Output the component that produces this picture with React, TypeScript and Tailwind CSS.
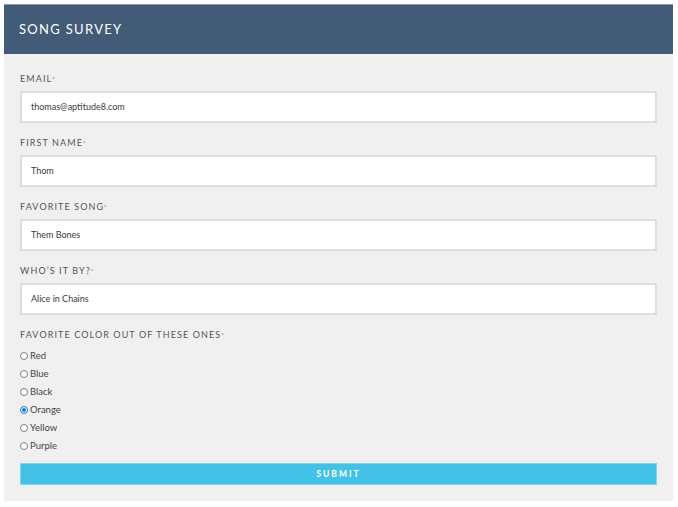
import React from "react";

const fields = [
  { label: "EMAIL", value: "thomas@aptitude8.com" },
  { label: "FIRST NAME", value: "Thom" },
  { label: "FAVORITE SONG", value: "Them Bones" },
  { label: "WHO’S IT BY?", value: "Alice in Chains" },
];

const colors = ["Red", "Blue", "Black", "Orange", "Yellow", "Purple"];

export default function App() {
  return (
    <div className="w-[678px] h-[507px] bg-white p-[4px] pr-[5px]" style={{ fontFamily: "Lato, 'Open Sans', sans-serif" }}>
      <div className="bg-[#f0f0f0] h-[497px] flex flex-col">
        <div className="h-[50px] bg-[#425b77] border-t border-[#8a9bb0] flex items-center pl-[15px]">
          <span className="text-white text-[13px] tracking-[1.3px]">SONG SURVEY</span>
        </div>
        <div className="px-[16px] pt-[19px] flex flex-col">
          {fields.map((f) => (
            <div key={f.label} className="flex flex-col mb-[14px]">
              <div className="h-[12px] leading-[12px] text-[9px] tracking-[1.1px] text-[#555]">
                {f.label}
                <span className="text-[6px] align-top">*</span>
              </div>
              <div className="mt-[6px] h-[32px] bg-white border-2 border-[#dedede] flex items-center pl-[9px] text-[9px] text-[#3a3a3a]">
                {f.value}
              </div>
            </div>
          ))}
          <div className="h-[12px] leading-[12px] text-[9px] tracking-[1.1px] text-[#555]">
            FAVORITE COLOR OUT OF THESE ONES<span className="text-[6px] align-top">*</span>
          </div>
          <div className="flex flex-col mt-[6px]">
            {colors.map((c) => (
              <div key={c} className="h-[18px] flex items-center">
                {c === "Orange" ? (
                  <span className="ml-[0px] w-[8px] h-[8px] rounded-full border border-[#1a73e8] bg-white flex items-center justify-center">
                    <span className="w-[4px] h-[4px] rounded-full bg-[#1a73e8]" />
                  </span>
                ) : (
                  <span className="ml-[0px] w-[8px] h-[8px] rounded-full border border-[#808080] bg-white" />
                )}
                <span className="ml-[2px] text-[9.5px] text-[#444]">{c}</span>
              </div>
            ))}
          </div>
          <div className="mt-[8px] h-[22px] bg-[#44c2e6] border border-[#7fd6f0] flex items-center justify-center">
            <span className="text-white text-[8.5px] font-bold tracking-[2px]">SUBMIT</span>
          </div>
        </div>
      </div>
    </div>
  );
}
